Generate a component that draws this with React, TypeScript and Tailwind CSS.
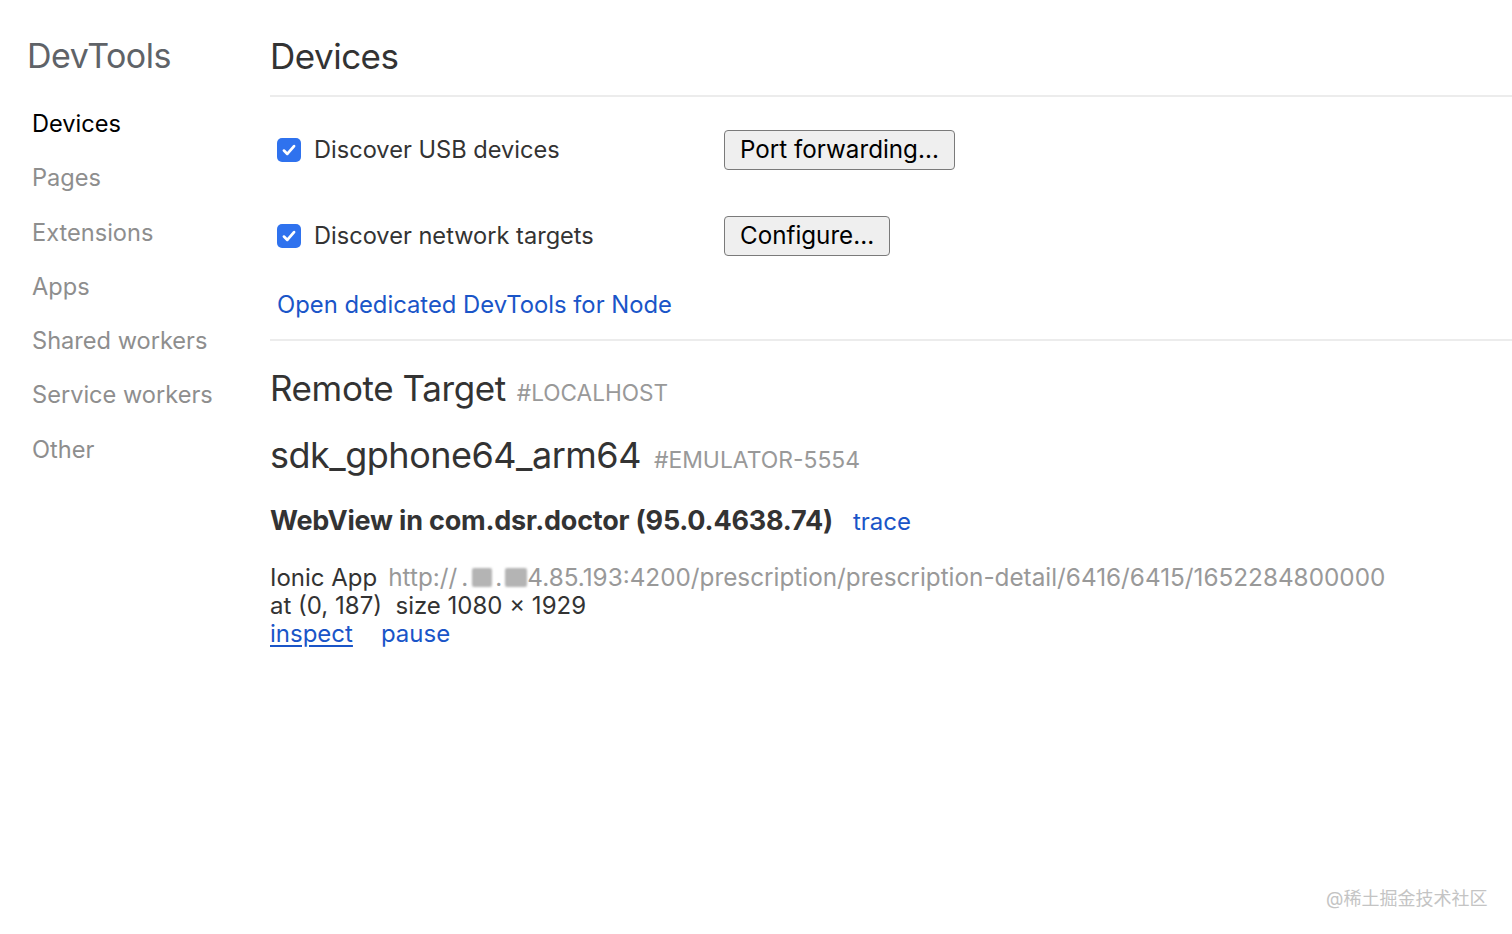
import React from 'react';

const navItems = ['Devices', 'Pages', 'Extensions', 'Apps', 'Shared workers', 'Service workers', 'Other'];

function CheckBox() {
  return (
    <span className="w-6 h-6 shrink-0 rounded-[5px] bg-[#2f72ee] flex items-center justify-center">
      <svg viewBox="0 0 16 16" className="w-[18px] h-[18px]" fill="none" stroke="white" strokeWidth="2.4" strokeLinecap="round" strokeLinejoin="round">
        <path d="M3.5 8.5l3 3 6-7" />
      </svg>
    </span>
  );
}

function OptionRow({ label, button }: { label: string; button: string }) {
  return (
    <div className="flex items-center h-[86px]">
      <div className="w-[454px] flex items-center gap-[13px] pl-[7px] text-[23.6px] text-[#333]">
        <CheckBox />
        <span>{label}</span>
      </div>
      <button className="h-[40px] px-[15px] rounded-[4px] border border-[#7a7a7a] bg-[#efefef] text-[24.2px] text-black leading-none">
        {button}
      </button>
    </div>
  );
}

export default function App() {
  return (
    <div className="min-h-screen bg-white flex relative" style={{ fontFamily: 'Inter, "Noto Sans CJK SC", sans-serif' }}>
      {/* Sidebar */}
      <aside className="w-[270px] shrink-0 pl-[27px] pt-[34px]">
        <h1 className="text-[34px] leading-[44px] text-[#5f6368] tracking-[-0.5px]">DevTools</h1>
        <nav className="mt-[31px] flex flex-col">
          {navItems.map((item, i) => (
            <div
              key={item}
              className={`pl-[5px] h-[54.3px] leading-[30px] text-[23.6px] ${i === 0 ? 'text-black' : 'text-[#8e8e8e]'}`}
            >
              {item}
            </div>
          ))}
        </nav>
      </aside>

      {/* Main */}
      <main className="flex-1 pt-[34px]">
        <h2 className="text-[35px] leading-[44px] text-[#333] tracking-[-0.5px]">Devices</h2>
        <div className="mt-[17px] h-[2px] bg-[#ececec]" />

        <div className="mt-[10px]">
          <OptionRow label="Discover USB devices" button="Port forwarding..." />
          <OptionRow label="Discover network targets" button="Configure..." />
        </div>

        <div className="pl-[7px] mt-[11px] text-[23.8px] leading-[30px] text-[#1a55c8]">Open dedicated DevTools for Node</div>
        <div className="mt-[19px] h-[2px] bg-[#ececec]" />

        <div className="mt-[27px] flex items-baseline gap-[11px]">
          <span className="text-[35px] leading-[40px] text-[#333] tracking-[-0.4px]">Remote Target</span>
          <span className="text-[22.6px] text-[#999]">#LOCALHOST</span>
        </div>

        <div className="mt-[24px] flex items-baseline gap-[13px]">
          <span className="text-[36px] leading-[42px] text-[#333] tracking-[-0.5px]">sdk_gphone64_arm64</span>
          <span className="text-[22.9px] text-[#999]">#EMULATOR-5554</span>
        </div>

        <div className="mt-[27px] flex items-baseline gap-[20px]">
          <span className="text-[27px] leading-[34px] font-bold text-[#333] tracking-[-0.2px]">WebView in com.dsr.doctor (95.0.4638.74)</span>
          <span className="text-[24px] text-[#1a55c8]">trace</span>
        </div>

        <div className="mt-[23px] text-[24px] leading-[28px] text-[#333]">
          <div className="flex items-baseline gap-[11px]">
            <span>Ionic App</span>
            <span className="text-[#999] text-[24.3px] flex items-baseline">
              http://
              <span className="mx-[4px]">.</span>
              <span className="inline-block w-[20px] h-[19px] bg-[#b4b4b4] rounded-[2px] blur-[1px] self-center" />
              <span className="mx-[3px]">.</span>
              <span className="inline-block w-[22px] h-[19px] bg-[#b4b4b4] rounded-[2px] blur-[1px] self-center" />
              4.85.193:4200/prescription/prescription-detail/6416/6415/1652284800000
            </span>
          </div>
          <div className="whitespace-pre">at (0, 187)  size 1080 × 1929</div>
          <div className="flex gap-[28px] text-[#1a55c8]">
            <span className="underline underline-offset-[3px]">inspect</span>
            <span>pause</span>
          </div>
        </div>
      </main>

      <div className="absolute left-[1326px] top-[885px] text-[18px] text-[#c4c4c4]">@稀土掘金技术社区</div>
    </div>
  );
}
